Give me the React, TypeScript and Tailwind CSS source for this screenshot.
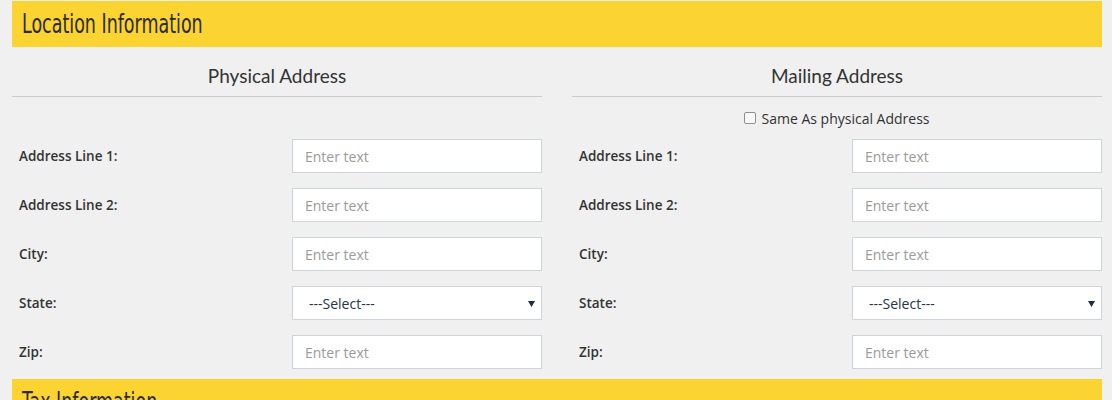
import React from "react";

const rows = ["Address Line 1:", "Address Line 2:", "City:", "State:", "Zip:"];

function Field({ label }: { label: string }) {
  const isSelect = label === "State:";
  return (
    <div className="flex items-center h-[34px] mb-[15px]">
      <div className="flex-1 pl-[7px] text-[13.5px] font-semibold text-[#333]" style={{ fontFamily: '"Open Sans", sans-serif' }}>
        {label}
      </div>
      {isSelect ? (
        <div className="relative w-[250px] h-[34px] bg-white border border-[#cfd3db] flex items-center pl-[16px] text-[14px] text-[#23324a]" style={{ fontFamily: '"Open Sans", sans-serif' }}>
          ---Select---
          <svg className="absolute right-[6px] top-[14px]" width="7" height="6" viewBox="0 0 7 6">
            <path d="M0 0 L7 0 L3.5 6 Z" fill="#1f2d44" />
          </svg>
        </div>
      ) : (
        <input
          placeholder="Enter text"
          className="w-[250px] h-[34px] bg-white border border-[#cfd3db] pl-[12px] text-[14px] text-[#333] placeholder:text-[#9a9a9a] outline-none"
          style={{ fontFamily: '"Open Sans", sans-serif' }}
        />
      )}
    </div>
  );
}

function Column({ title, checkbox }: { title: string; checkbox?: boolean }) {
  return (
    <div className="w-[530px]">
      <div className="h-[50px] pt-[9px] flex items-center justify-center border-b border-[#cccccc] text-[19px] text-[#333]" style={{ fontFamily: 'Lato, sans-serif' }}>
        {title}
      </div>
      <div className="h-[42px] flex items-center justify-center">
        {checkbox && (
          <label className="flex items-center gap-[5px] text-[14px] text-[#333]" style={{ fontFamily: '"Open Sans", sans-serif' }}>
            <span className="w-[12px] h-[12px] border border-[#8f8f8f] rounded-[2px] bg-[#f8f8f8] inline-block" />
            Same As physical Address
          </label>
        )}
      </div>
      {rows.map((r) => (
        <Field key={r} label={r} />
      ))}
    </div>
  );
}

export default function App() {
  return (
    <div className="w-[1112px] h-[400px] bg-[#f0f0f0] overflow-hidden pt-[1px] pl-[12px]">
      <div className="w-[1090px] h-[46px] bg-[#fbd431] flex items-center pl-[10px]">
        <span className="text-[27px] text-[#2b2b2b] inline-block origin-left scale-x-[0.72]" style={{ fontFamily: '"DejaVu Sans Condensed", "DejaVu Sans", sans-serif' }}>
          Location Information
        </span>
      </div>
      <div className="flex gap-[30px]">
        <Column title="Physical Address" />
        <Column title="Mailing Address" checkbox />
      </div>
      <div className="w-[1090px] h-[46px] bg-[#fbd431] flex items-center pl-[10px] -mt-[5px]">
        <span className="text-[27px] text-[#2b2b2b] inline-block origin-left scale-x-[0.72]" style={{ fontFamily: '"DejaVu Sans Condensed", "DejaVu Sans", sans-serif' }}>
          Tax Information
        </span>
      </div>
    </div>
  );
}
